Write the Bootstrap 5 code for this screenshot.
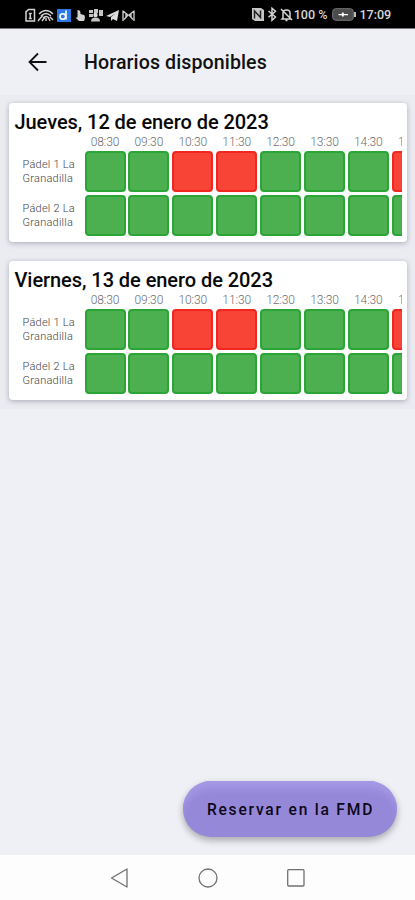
<!DOCTYPE html>
<html lang="es">
<head>
<meta charset="utf-8">
<meta name="viewport" content="width=device-width, initial-scale=1">
<title>Horarios disponibles</title>
<link href="https://cdn.jsdelivr.net/npm/bootstrap@5.3.0/dist/css/bootstrap.min.css" rel="stylesheet">
<style>
  body { font-family: Roboto, sans-serif; background: #eff0f6; color: #111; height: 900px; line-height: 1.2; }
  .status { height: 29px; background: #000; color: #d6d6d6; padding: 2px 24px 0 25px; font-size: 12.6px; font-weight: 500; border-bottom: 1px solid #77757a; }
  .status svg, .topbar svg, .softkeys svg { display: block; flex: none; }
  .clock { padding-left: 3px; letter-spacing: -.1px; }
  .topbar { height: 66px; padding: 2px 25px 0; }
  .topbar h1 { font-size: 19.6px; font-weight: 500; margin-left: 34px; letter-spacing: .1px; }
  .days { padding: 8px 8px 9px 9px; background: #ebecf2; gap: 18.5px; }
  .day { height: 139px; border-radius: 4px; padding: 7px 5px 0 5.5px; box-shadow: 0 1px 4px rgba(50,50,75,.25), 0 2px 7px rgba(50,50,75,.12); }
  .day h2 { font-size: 20px; line-height: 25px; font-weight: 500; color: #080808; white-space: nowrap; letter-spacing: -.06px; }
  .times { height: 16px; line-height: 14.5px; }
  .strip { overflow: hidden; gap: 2.9px; }
  .slot { width: 41px; flex: none; }
  .hour { font-size: 12px; color: #6e6e6e; font-weight: 300; text-align: center; letter-spacing: -.1px; }
  .court { width: 70px; flex: none; padding: 1px 0 0 8px; font-size: 11px; line-height: 13.6px; font-weight: 300; color: #444; letter-spacing: .24px; }
  .cell { height: 41px; border-radius: 4px; border: 2px solid #2ba535; background: #4caf50; }
  .cell.taken { border-color: #f0261f; background: #f84437; }
  .rows { gap: 3px; }
  .reserve { width: 214px; height: 56px; margin-right: 18px; margin-bottom: 18px; font-size: 15.6px; font-weight: 500; letter-spacing: 1.78px; color: #0c0718; background: #9688d8; box-shadow: inset 0 10px 8px -3px #a699e7, 0 3px 6px rgba(0,0,0,.22), 0 4px 10px rgba(0,0,0,.1); padding: 4px 0 0 1px; }
  .reserve:hover { background: #9688d8; color: #0c0718; }
  .softkeys { height: 45px; background: #fdfdfd; gap: 68px; }
</style>
<script src="https://cdn.jsdelivr.net/npm/bootstrap@5.3.0/dist/js/bootstrap.bundle.min.js"></script>
</head>
<body class="d-flex flex-column overflow-hidden">
<header class="status d-flex align-items-center justify-content-between">
  <svg width="112" height="15" viewBox="0 0 112 15" fill="none" stroke="#d2d2d2" stroke-width="1.5">
    <path d="M1.500 3.500l2-2h6v11.500h-8.500v-9.500zM3.800 5.500h3M5.300 5.500v5M3.800 10.500h3"/>
    <path d="M14 6q7-7 14 0M16 8q5-5 10 0M18 10q3-3 6 0M13 13l5-6M17 13l3-4M21 13v-3M25 13l-2-4M28 12l-3-3" stroke-width="1.400"/>
    <path d="M32 1h14v13H32z" fill="#2a79e5" stroke="none"/>
    <ellipse cx="37.800" cy="8.500" rx="2.800" ry="2.700" stroke="#fff" stroke-width="1.600"/><path d="M41 2.500v9" stroke="#fff" stroke-width="1.600"/>
    <path d="M52.500 2c2.500 0 3 1 3 4l3.500 1c1 .5 1.500 3 0 6h-5l-3.500-3.500 2 0z" fill="#d2d2d2" stroke="none"/>
    <path d="M64 2h4v3h-4zM69 1h4v4h-4zM74 2h4v6h-4zM64 6h4v3h-4zM66 13.500q0-4 4.500-4t4.500 4z" fill="#c4c4c4" stroke="none"/><circle cx="70.500" cy="7" r="2.200" fill="#ddd" stroke="none"/>
    <path d="M81 8L94 2l-2 11-4-2-2 2v-4l5-4-6 4z" fill="#e0e0e0" stroke="none"/>
    <path d="M98 2.500v10.500M109 2.500v10.500M98 3l5 4-4 4.500M109 3l-5 4 4 4.500M101 5.500v4M106 5.500v4" stroke-width="1.300"/>
  </svg>
  <div class="d-flex align-items-center">
    <svg width="42" height="15" viewBox="0 0 42 15" fill="none" stroke="#d2d2d2" stroke-width="1.500">
      <path d="M0 1h9l3 2v11H3l-3-2z" fill="#c6c6c6" stroke="none"/><path d="M2.500 11.500V4l6 6.500V3.500" stroke="#222"/>
      <path d="M16.500 4l7 6-3.500 3.200V1.300l3.500 3-7 6"/>
      <path d="M31 11V6c0-4 7-4 7 0v5l1 1H30zM29 2l11 11M33.500 13.500h2"/>
    </svg>
    <span>100&nbsp;%</span>
    <svg class="ms-1" width="25" height="13" viewBox="0 0 25 13"><rect x=".7" y=".7" width="20.600" height="11.600" rx="3" fill="#4b4b4b" stroke="#777"/><path d="M22 4h2v5h-2z" fill="#bbb"/><path d="M6.500 6h3L11 3.800l1 2.200h4v1.200h-4L11 9.200 9.500 7.200h-3z" fill="#fff"/></svg>
    <span class="clock">17:09</span>
  </div>
</header>
<div class="topbar d-flex align-items-center">
  <svg width="25" height="24" viewBox="0 0 25 24" fill="none" stroke="#111" stroke-width="1.800"><path d="M21.500 11H4.500M13 2.500L4.500 11l8.500 8.500"/></svg>
  <h1 class="mb-0">Horarios disponibles</h1>
</div>
<main class="days d-flex flex-column" id="days"></main>
<div class="mt-auto d-flex justify-content-end">
  <button type="button" class="btn reserve rounded-pill border-0 text-nowrap">Reservar en la FMD</button>
</div>
<footer class="softkeys d-flex justify-content-center align-items-center">
  <svg width="20" height="22" viewBox="0 0 20 22" fill="none" stroke="#707070" stroke-width="1.300"><path d="M17 2v18L1.500 11z" stroke-linejoin="round"/></svg>
  <svg width="20" height="20" viewBox="0 0 20 20" fill="none" stroke="#707070" stroke-width="1.300"><circle cx="10" cy="10" r="9"/></svg>
  <svg width="20" height="20" viewBox="0 0 20 20" fill="none" stroke="#707070" stroke-width="1.300"><rect x="1.700" y="1.700" width="16.300" height="16.300" rx="1"/></svg>
</footer>
<script>
  const hours = ['08:30', '09:30', '10:30', '11:30', '12:30', '13:30', '14:30', '15:30'];
  const courts = [['Pádel 1 La', [2, 3, 7]], ['Pádel 2 La', []]];
  const days = ['Jueves, 12 de enero de 2023', 'Viernes, 13 de enero de 2023'];
  document.getElementById('days').innerHTML = days.map(day => `
    <section class="day bg-white">
      <h2 class="mb-0">${day}</h2>
      <div class="d-flex times"><div class="court"></div>
        <div class="strip d-flex">${hours.map(h => `<div class="slot hour">${h}</div>`).join('')}</div></div>
      <div class="rows d-flex flex-column">${courts.map(([name, taken]) => `
        <div class="d-flex align-items-center"><div class="court">${name}<br>Granadilla</div>
          <div class="strip d-flex">${hours.map((h, i) => `<div class="slot cell${taken.includes(i) ? ' taken' : ''}"></div>`).join('')}</div></div>`).join('')}
      </div>
    </section>`).join('');
</script>
</body>
</html>
